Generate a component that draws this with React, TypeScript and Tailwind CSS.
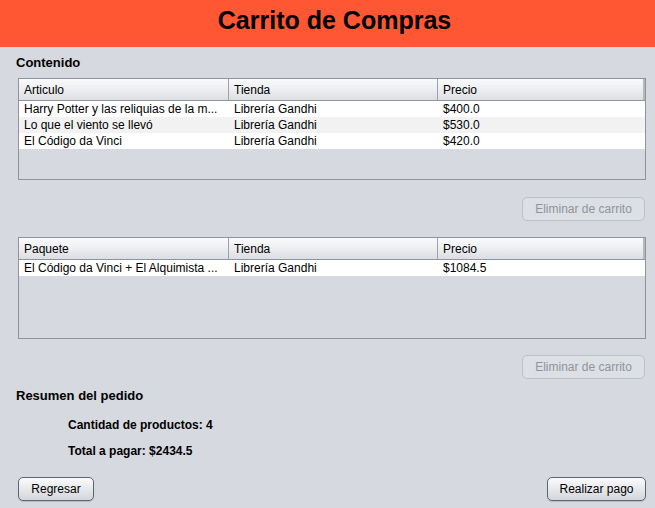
import React from "react";

type Col = { title: string; w: string };

const font = { fontFamily: '"Liberation Sans", Arial, sans-serif' };

const Table = ({ cols, rows }: { cols: Col[]; rows: string[][] }) => {
  return (
    <div className="h-[102px] border border-[#8e939c] bg-[#d6d9df] flex flex-col">
      <div className="flex h-[22px] border-b border-[#8e939c] bg-gradient-to-b from-[#f9fafb] via-[#eceef1] to-[#dcdee3]">
        {cols.map((c, i) => (
          <div
            key={c.title}
            className={`${c.w} flex items-center pl-[5px] text-[12px] text-black ${
              i < cols.length - 1 ? "border-r border-[#9da2aa]" : "border-r-2 border-[#b4b8bf]"
            }`}
          >
            {c.title}
          </div>
        ))}
      </div>
      {rows.map((r, i) => (
        <div key={i} className={`flex h-[16px] ${i % 2 === 0 ? "bg-white" : "bg-[#f2f2f2]"}`}>
          {r.map((cell, j) => (
            <div key={j} className={`${cols[j].w} pl-[5px] text-[12px] leading-[16px] text-black whitespace-nowrap overflow-hidden`}>
              {cell}
            </div>
          ))}
        </div>
      ))}
    </div>
  );
};

const Btn = ({ label, disabled, w }: { label: string; disabled?: boolean; w: string }) => {
  return (
    <button
      className={`${w} h-[24px] rounded-[5px] text-[12px] flex items-center justify-center border ${
        disabled
          ? "border-[#bcc0c7] bg-[#dcdfe4] text-[#8f949c]"
          : "border-[#5f656e] bg-gradient-to-b from-[#fbfbfc] to-[#d3d6dc] text-black shadow-[0_1px_1px_rgba(0,0,0,0.15)]"
      }`}
    >
      {label}
    </button>
  );
};

export default function App() {
  const cols1: Col[] = [
    { title: "Articulo", w: "w-[210px]" },
    { title: "Tienda", w: "w-[209px]" },
    { title: "Precio", w: "flex-1" },
  ];
  const cols2: Col[] = [
    { title: "Paquete", w: "w-[210px]" },
    { title: "Tienda", w: "w-[209px]" },
    { title: "Precio", w: "flex-1" },
  ];

  return (
    <div className="w-[655px] h-[508px] bg-[#d6d9df] flex flex-col overflow-hidden" style={font}>
      <header className="h-[47px] bg-[#ff5733] flex items-center justify-center pl-[14px]">
        <h1 className="text-[25px] font-bold text-black -mt-[5px]">Carrito de Compras</h1>
      </header>

      <div className="pl-[18px] pr-[9px] flex flex-col">
        <div className="h-[31px] flex items-center -ml-[2px] text-[13px] font-bold text-black">Contenido</div>

        <Table
          cols={cols1}
          rows={[
            ["Harry Potter y las reliquias de la m...", "Librería Gandhi", "$400.0"],
            ["Lo que el viento se llevó", "Librería Gandhi", "$530.0"],
            ["El Código da Vinci", "Librería Gandhi", "$420.0"],
          ]}
        />

        <div className="flex justify-end mt-[17px] mr-[1px]">
          <Btn label="Eliminar de carrito" disabled w="w-[123px]" />
        </div>

        <div className="mt-[16px]">
          <Table cols={cols2} rows={[["El Código da Vinci + El Alquimista ...", "Librería Gandhi", "$1084.5"]]} />
        </div>

        <div className="flex justify-end mt-[16px] mr-[1px]">
          <Btn label="Eliminar de carrito" disabled w="w-[123px]" />
        </div>

        <div className="h-[34px] flex items-center -ml-[2px] text-[13px] font-bold text-black">Resumen del pedido</div>

        <div className="pl-[50px] text-[12px] font-bold text-black flex flex-col">
          <div className="h-[23px] flex items-center">Cantidad de productos: 4</div>
          <div className="h-[30px] flex items-center">Total a pagar: $2434.5</div>
        </div>

        <div className="flex justify-between mt-[11px]">
          <Btn label="Regresar" w="w-[76px]" />
          <Btn label="Realizar pago" w="w-[99px]" />
        </div>
      </div>
    </div>
  );
}
